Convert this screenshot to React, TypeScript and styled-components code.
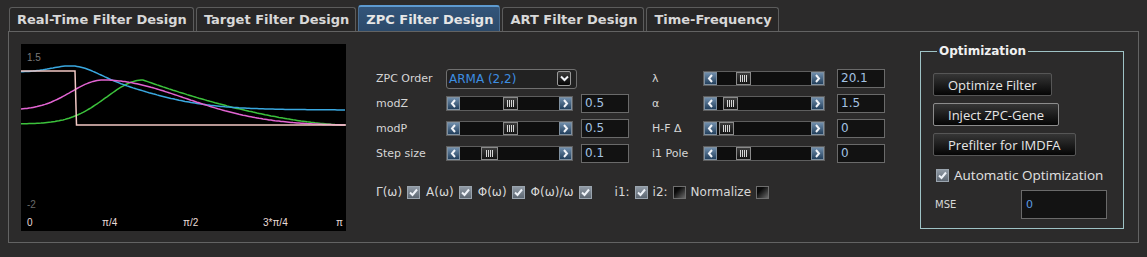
import React from 'react';
import styled, { createGlobalStyle } from 'styled-components';

const CHART_W = 325;
const CHART_H = 187;

const curve = (f: (x: number) => number) => {
    const pts: string[] = [];
    for (let x = 0; x <= CHART_W; x += 2) pts.push(`${x},${f(x).toFixed(1)}`);
    return pts.join(' ');
};

const cyan = (x: number) =>
    66 - 39 / (1 + Math.exp((x - 120) / 35)) - 10 * Math.exp(-(((x - 55) / 32) ** 2));

const magenta = (x: number) =>
    x < 82
        ? 36 + (29 * (1 - Math.exp(-(((82 - x) / 45) ** 2)))) / (1 - Math.exp(-((82 / 45) ** 2)))
        : 36 + (45 * (1 - Math.exp(-(((x - 82) / 115) ** 2)))) / (1 - Math.exp(-((243 / 115) ** 2)));

const green = (x: number) =>
    x < 122
        ? 36 + 44 * (1 - Math.exp(-(((122 - x) / 52) ** 2)))
        : 36 + 45 * (1 - (1 - (x - 122) / 203) ** 1.6);

const GlobalStyle = createGlobalStyle`
    html, body {
        margin: 0;
        background: #2c2b2b;
    }
    body {
        font-family: "DejaVu Sans", sans-serif;
        color: #d8d8d8;
    }
`;

const Chevron = ({ dir }: { dir: 'left' | 'right' | 'down' }) => {
    const d = dir === 'left' ? 'M6 2 L3 5.5 L6 9' : dir === 'right' ? 'M3 2 L6 5.5 L3 9' : 'M2 3.5 L5.5 7 L9 3.5';
    const w = dir === 'down' ? 11 : 9;
    return (
        <svg width={w} height={11} viewBox={`0 0 ${w} 11`}>
            <path d={d} fill="none" stroke="#f2f4f8" strokeWidth={2} />
        </svg>
    );
};

const Scroll = ({ width, offset, thumb = 15 }: { width: number; offset: number; thumb?: number }) => (
    <ScrollBar $w={width}>
        <ScrollButton>
            <Chevron dir="left" />
        </ScrollButton>
        <ScrollTrack>
            <ScrollThumb $offset={offset} $w={thumb} />
        </ScrollTrack>
        <ScrollButton>
            <Chevron dir="right" />
        </ScrollButton>
    </ScrollBar>
);

const Check = ({ label, checked }: { label: string; checked: boolean }) => (
    <Toggle>
        {label}
        <Box $checked={checked}>{checked && <Tick />}</Box>
    </Toggle>
);

const Tick = () => (
    <svg width={11} height={11} viewBox="0 0 11 11">
        <path d="M2 5.5 L4.5 8 L9 2.5" fill="none" stroke="#eef2f8" strokeWidth={2} />
    </svg>
);

const tabs = ['Real-Time Filter Design', 'Target Filter Design', 'ZPC Filter Design', 'ART Filter Design', 'Time-Frequency'];

export default function App() {
    return (
        <Page>
            <GlobalStyle />
            <TabBar>
                {tabs.map((t) => (
                    <Tab key={t} $active={t === 'ZPC Filter Design'}>
                        {t}
                    </Tab>
                ))}
            </TabBar>
            <Panel>
                <Chart width={CHART_W} height={CHART_H} viewBox={`0 0 ${CHART_W} ${CHART_H}`}>
                    <rect width={CHART_W} height={CHART_H} fill="#000" />
                    <polyline points={curve(green)} fill="none" stroke="#3cc23c" strokeWidth={1.5} />
                    <polyline points={curve(cyan)} fill="none" stroke="#3aa8e0" strokeWidth={1.5} />
                    <polyline points={curve(magenta)} fill="none" stroke="#e264d2" strokeWidth={1.5} />
                    <polyline points="0,27 54,27 55.5,81 325,81" fill="none" stroke="#f2c8c4" strokeWidth={1.5} />
                    <AxisText x={6} y={17} fill="#7a7a7a">1.5</AxisText>
                    <AxisText x={6} y={164} fill="#6a6a6a">-2</AxisText>
                    <AxisText x={6} y={182} fill="#eadcd8">0</AxisText>
                    <AxisText x={81} y={182} fill="#eadcd8">π/4</AxisText>
                    <AxisText x={162} y={182} fill="#eadcd8">π/2</AxisText>
                    <AxisText x={242} y={182} fill="#eadcd8">3*π/4</AxisText>
                    <AxisText x={315} y={182} fill="#eadcd8">π</AxisText>
                </Chart>

                <Controls>
                    <ParamGrid>
                        <Label>ZPC Order</Label>
                        <Select>
                            ARMA (2,2)
                            <SelectArrow>
                                <Chevron dir="down" />
                            </SelectArrow>
                        </Select>
                        <span />
                        <Label>λ</Label>
                        <Scroll width={122} offset={19} />
                        <Field>20.1</Field>

                        <Label>modZ</Label>
                        <Scroll width={127} offset={43} />
                        <Field>0.5</Field>
                        <Label>α</Label>
                        <Scroll width={122} offset={6} />
                        <Field>1.5</Field>

                        <Label>modP</Label>
                        <Scroll width={127} offset={43} />
                        <Field>0.5</Field>
                        <Label>H-F Δ</Label>
                        <Scroll width={122} offset={2} />
                        <Field>0</Field>

                        <Label>Step size</Label>
                        <Scroll width={127} offset={21} thumb={17} />
                        <Field>0.1</Field>
                        <Label>i1 Pole</Label>
                        <Scroll width={122} offset={19} />
                        <Field>0</Field>
                    </ParamGrid>

                    <ToggleRow>
                        <Check label="Γ(ω)" checked />
                        <Check label="A(ω)" checked />
                        <Check label="Φ(ω)" checked />
                        <Check label="Φ(ω)/ω" checked />
                        <ToggleGroup>
                            <Check label="i1:" checked />
                            <Check label="i2:" checked={false} />
                            <Check label="Normalize" checked={false} />
                        </ToggleGroup>
                    </ToggleRow>
                </Controls>

                <Group>
                    <GroupTitle>Optimization</GroupTitle>
                    <GroupBody>
                        <ActionButton>Optimize Filter</ActionButton>
                        <ActionButton $focused>Inject ZPC-Gene</ActionButton>
                        <ActionButton>Prefilter for IMDFA</ActionButton>
                        <AutoRow>
                            <Box $checked>
                                <Tick />
                            </Box>
                            Automatic Optimization
                        </AutoRow>
                        <MseRow>
                            <MseLabel>MSE</MseLabel>
                            <MseField>0</MseField>
                        </MseRow>
                    </GroupBody>
                </Group>
            </Panel>
        </Page>
    );
}

const Page = styled.div`
    width: 1147px;
    height: 257px;
    padding-top: 5px;
    box-sizing: border-box;
`;

const TabBar = styled.div`
    display: flex;
    align-items: flex-end;
    gap: 2px;
    height: 26px;
    padding-left: 9px;
`;

const Tab = styled.div<{ $active?: boolean }>`
    height: ${({ $active }) => ($active ? '26px' : '24px')};
    box-sizing: border-box;
    padding: 0 6px 0 7px;
    display: flex;
    align-items: center;
    font: bold 13px 'DejaVu Sans', sans-serif;
    color: ${({ $active }) => ($active ? '#e6e6e6' : '#d8d8d8')};
    border: 1px solid ${({ $active }) => ($active ? '#4a6e92' : '#5c5c5c')};
    border-top: ${({ $active }) => ($active ? '2px solid #5d9ad0' : '1px solid #5c5c5c')};
    border-bottom: none;
    border-radius: 3px 3px 0 0;
    background: ${({ $active }) => ($active ? 'linear-gradient(#33557a, #2c4a6a)' : '#282727')};
`;

const Panel = styled.div`
    margin-left: 8px;
    width: 1131px;
    height: 212px;
    box-sizing: border-box;
    border: 1px solid #636363;
    padding: 12px 14px 0 12px;
    display: flex;
    align-items: flex-start;
`;

const Chart = styled.svg`
    display: block;
    flex-shrink: 0;
`;

const AxisText = styled.text`
    font-family: 'Liberation Sans', Arial, sans-serif;
    font-size: 10px;
`;

const Controls = styled.div`
    margin-left: 30px;
    padding-top: 22px;
    display: flex;
    flex-direction: column;
`;

const ParamGrid = styled.div`
    display: grid;
    grid-template-columns: 70px 135px 71px 51px 134px 49px;
    grid-auto-rows: 25px;
    align-items: center;
`;

const Label = styled.span`
    font-size: 11px;
    color: #d6d6d6;
`;

const Select = styled.div`
    width: 131px;
    height: 20px;
    box-sizing: border-box;
    border: 1px solid #707070;
    border-radius: 3px;
    background: #222;
    display: flex;
    align-items: center;
    justify-content: space-between;
    padding: 0 5px 0 2px;
    color: #3d8ee0;
    font-size: 12px;
`;

const SelectArrow = styled.div`
    width: 14px;
    height: 15px;
    box-sizing: border-box;
    border: 1px solid #9a9a9a;
    border-radius: 2px;
    background: linear-gradient(#3c3c3c, #050505);
    display: flex;
    align-items: center;
    justify-content: center;
`;

const ScrollBar = styled.div<{ $w: number }>`
    width: ${({ $w }) => $w}px;
    height: 15px;
    box-sizing: border-box;
    border: 1px solid #5e5e5e;
    background: #0e0e0e;
    display: flex;
`;

const ScrollButton = styled.div`
    width: 13px;
    flex-shrink: 0;
    box-sizing: border-box;
    border: 1px solid #7f90a0;
    background: linear-gradient(#6f8dab, #23405d);
    display: flex;
    align-items: center;
    justify-content: center;
`;

const ScrollTrack = styled.div`
    flex: 1;
    display: flex;
`;

const ScrollThumb = styled.div<{ $offset: number; $w: number }>`
    margin-left: ${({ $offset }) => $offset}px;
    width: ${({ $w }) => $w}px;
    box-sizing: border-box;
    border: 1px solid #8a8a8a;
    background: linear-gradient(#3a3a3a, #141414);
    display: flex;
    align-items: center;
    justify-content: center;
    &::after {
        content: '';
        width: 7px;
        height: 7px;
        background: repeating-linear-gradient(90deg, #d8d8d8 0 1px, transparent 1px 2px);
    }
`;

const Field = styled.div`
    width: 48px;
    height: 19px;
    box-sizing: border-box;
    border: 1px solid #6a6a6a;
    background: #121212;
    color: #a3c2e3;
    font-size: 12px;
    line-height: 17px;
    padding-left: 3px;
`;

const ToggleRow = styled.div`
    display: flex;
    align-items: center;
    gap: 6px;
    margin-top: 19px;
    font-size: 12px;
    color: #d8d8d8;
`;

const ToggleGroup = styled.div`
    display: flex;
    align-items: center;
    gap: 5px;
    margin-left: 17px;
`;

const Toggle = styled.label`
    display: flex;
    align-items: center;
    gap: 5px;
`;

const Box = styled.span<{ $checked: boolean }>`
    width: 13px;
    height: 13px;
    box-sizing: border-box;
    flex-shrink: 0;
    border: 1px solid ${({ $checked }) => ($checked ? '#9aa4ae' : '#6e6e6e')};
    background: ${({ $checked }) =>
        $checked ? 'linear-gradient(#8f99a4, #5d6772)' : 'linear-gradient(135deg, #0a0a0a 30%, #6a6a6a)'};
    display: flex;
    align-items: center;
    justify-content: center;
`;

const Group = styled.fieldset`
    margin: 0 0 0 auto;
    width: 204px;
    height: 185px;
    box-sizing: border-box;
    border: 1px solid #9fc3c6;
    padding: 0 12px;
    min-width: 0;
`;

const GroupTitle = styled.legend`
    padding: 0 2px;
    margin-left: 4px;
    font: bold 12px 'DejaVu Sans', sans-serif;
    line-height: 14px;
    color: #f0f0f0;
`;

const GroupBody = styled.div`
    display: flex;
    flex-direction: column;
    align-items: flex-start;
    gap: 7px;
    padding-top: 15px;
`;

const ActionButton = styled.button<{ $focused?: boolean }>`
    height: 23px;
    padding: 0 14px;
    font: 13px 'Open Sans', sans-serif;
    color: #e6e6e6;
    background: linear-gradient(#363636, #050505);
    border: 1px solid ${({ $focused }) => ($focused ? '#8c8c8c' : '#565656')};
    border-radius: 2px;
`;

const AutoRow = styled.label`
    display: flex;
    align-items: center;
    gap: 5px;
    margin-top: 3px;
    padding-left: 3px;
    font: 13.5px 'Open Sans', sans-serif;
    color: #e2e2e2;
`;

const MseRow = styled.div`
    display: flex;
    align-items: center;
    margin-top: -1px;
    padding-left: 2px;
`;

const MseLabel = styled.span`
    width: 86px;
    font-size: 10px;
    color: #d8d8d8;
`;

const MseField = styled.div`
    width: 86px;
    height: 29px;
    box-sizing: border-box;
    border: 1px solid #6a6a6a;
    background: #131313;
    color: #5b9be0;
    font-size: 11px;
    padding-left: 4px;
    display: flex;
    align-items: center;
`;
